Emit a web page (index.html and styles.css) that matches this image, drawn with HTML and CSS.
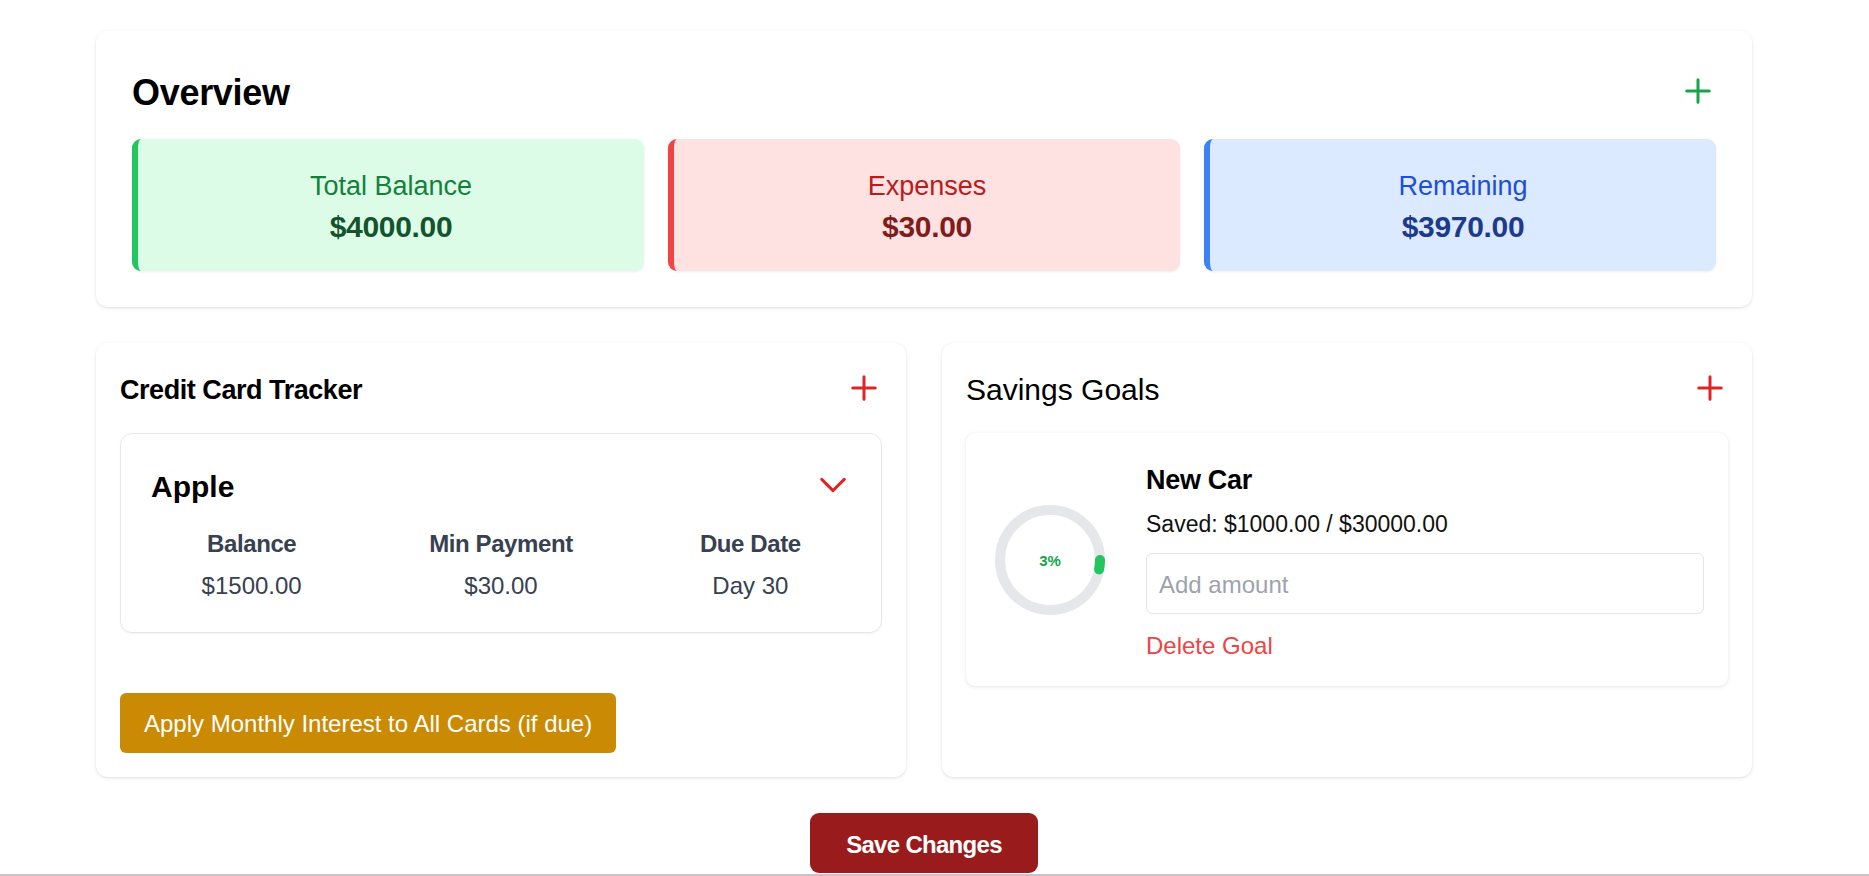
FILE: index.html
```
<!DOCTYPE html>
<html lang="en">
<head>
<meta charset="utf-8">
<title>Budget</title>
<link rel="stylesheet" href="styles.css">
</head>
<body>
<div class="page">
  <main class="container">
    <section class="card overview">
      <div class="card-head">
        <h2 class="overview-title">Overview</h2>
        <button class="icon-btn icon-green" aria-label="Add">
          <svg viewBox="0 0 24 24" width="36" height="36" fill="none" stroke="currentColor" stroke-width="2" stroke-linecap="round"><path d="M12 4.5v15m7.5-7.5h-15"/></svg>
        </button>
      </div>
      <div class="stats">
        <div class="stat stat-green">
          <div class="stat-label">Total Balance</div>
          <div class="stat-value">$4000.00</div>
        </div>
        <div class="stat stat-red">
          <div class="stat-label">Expenses</div>
          <div class="stat-value">$30.00</div>
        </div>
        <div class="stat stat-blue">
          <div class="stat-label">Remaining</div>
          <div class="stat-value">$3970.00</div>
        </div>
      </div>
    </section>

    <div class="columns">
      <section class="card panel">
        <div class="panel-head">
          <h3 class="panel-title panel-title-bold">Credit Card Tracker</h3>
          <button class="icon-btn icon-red" aria-label="Add card">
            <svg viewBox="0 0 24 24" width="36" height="36" fill="none" stroke="currentColor" stroke-width="2" stroke-linecap="round"><path d="M12 4.5v15m7.5-7.5h-15"/></svg>
          </button>
        </div>
        <div class="cc-card">
          <div class="cc-head">
            <h4 class="cc-name">Apple</h4>
            <button class="icon-btn icon-red" aria-label="Expand">
              <svg viewBox="0 0 24 24" width="36" height="36" fill="none" stroke="currentColor" stroke-width="2" stroke-linecap="round" stroke-linejoin="round"><path d="m19.5 8.25-7.5 7.5-7.5-7.5"/></svg>
            </button>
          </div>
          <div class="cc-grid">
            <div class="cc-cell">
              <div class="cc-label">Balance</div>
              <div class="cc-value">$1500.00</div>
            </div>
            <div class="cc-cell">
              <div class="cc-label">Min Payment</div>
              <div class="cc-value">$30.00</div>
            </div>
            <div class="cc-cell">
              <div class="cc-label">Due Date</div>
              <div class="cc-value">Day 30</div>
            </div>
          </div>
        </div>
        <button class="apply-btn">Apply Monthly Interest to All Cards (if due)</button>
      </section>

      <section class="card panel">
        <div class="panel-head">
          <h3 class="panel-title">Savings Goals</h3>
          <button class="icon-btn icon-red" aria-label="Add goal">
            <svg viewBox="0 0 24 24" width="36" height="36" fill="none" stroke="currentColor" stroke-width="2" stroke-linecap="round"><path d="M12 4.5v15m7.5-7.5h-15"/></svg>
          </button>
        </div>
        <div class="goal-card">
          <svg class="ring" viewBox="0 0 120 120" width="120" height="120">
            <circle cx="60" cy="60" r="50" fill="none" stroke="#e5e7eb" stroke-width="10"/>
            <circle cx="60" cy="60" r="50" fill="none" stroke="#22c55e" stroke-width="10" stroke-linecap="round" stroke-dasharray="9.42 314.16"/>
            <text x="60" y="60" class="ring-text" text-anchor="middle" dominant-baseline="central">3%</text>
          </svg>
          <div class="goal-body">
            <div class="goal-name">New Car</div>
            <div class="goal-saved">Saved: $1000.00 / $30000.00</div>
            <input class="goal-input" type="text" placeholder="Add amount">
            <button class="delete-btn">Delete Goal</button>
          </div>
        </div>
      </section>
    </div>

    <div class="save-row">
      <button class="save-btn">Save Changes</button>
    </div>
  </main>
  <div class="footer-line"></div>
</div>
</body>
</html>
```

FILE: styles.css
```
* {
  box-sizing: border-box;
}

html, body {
  margin: 0;
  padding: 0;
  background: #ffffff;
}

body {
  font-family: "Liberation Sans", Arial, sans-serif;
  color: #111111;
  overflow: hidden;
}

button {
  font-family: inherit;
}

.page {
  padding-top: 31px;
}

.container {
  width: 1656px;
  margin-left: 96px;
}

.card {
  background: #ffffff;
  border-radius: 12px;
  box-shadow: 0 1px 4px rgba(0, 0, 0, 0.09), 0 1px 2px rgba(0, 0, 0, 0.05);
}

.overview {
  padding: 36px;
}

.card-head {
  display: flex;
  justify-content: space-between;
  align-items: center;
  height: 48px;
  margin-bottom: 24px;
}

.overview-title {
  margin: 0;
  padding-top: 4px;
  font-size: 36px;
  line-height: 48px;
  font-weight: 700;
  color: #000000;
  letter-spacing: -0.3px;
}

.icon-btn {
  display: flex;
  align-items: center;
  justify-content: center;
  width: 36px;
  height: 36px;
  padding: 0;
  margin: 0;
  border: 0;
  background: transparent;
}

.icon-green {
  color: #16a34a;
}

.icon-red {
  color: #dc2626;
}

.stats {
  display: grid;
  grid-template-columns: repeat(3, 1fr);
  gap: 24px;
}

.stat {
  height: 132px;
  padding: 24px 16px;
  border-radius: 9px;
  border-left: 6px solid;
  text-align: center;
  box-shadow: 0 1px 3px rgba(0, 0, 0, 0.07);
}

.stat-label {
  font-size: 27px;
  line-height: 42px;
  padding-top: 2px;
  height: 42px;
}

.stat-value {
  font-size: 30px;
  line-height: 42px;
  padding-top: 1px;
  height: 42px;
  font-weight: 700;
  letter-spacing: -0.3px;
}

.stat-green {
  background: #dcfce7;
  border-left-color: #22c55e;
}

.stat-green .stat-label {
  color: #15803d;
}

.stat-green .stat-value {
  color: #14532d;
}

.stat-red {
  background: #fee2e2;
  border-left-color: #ef4444;
}

.stat-red .stat-label {
  color: #b91c1c;
}

.stat-red .stat-value {
  color: #7f1d1d;
}

.stat-blue {
  background: #dbeafe;
  border-left-color: #3b82f6;
}

.stat-blue .stat-label {
  color: #1d4ed8;
}

.stat-blue .stat-value {
  color: #1e3a8a;
}

.columns {
  display: grid;
  grid-template-columns: 1fr 1fr;
  gap: 36px;
  margin-top: 36px;
}

.panel {
  padding: 24px;
}

.panel-head {
  display: flex;
  justify-content: space-between;
  align-items: center;
  height: 42px;
  margin-bottom: 24px;
}

.panel-title {
  margin: 0;
  padding-top: 3px;
  font-size: 30px;
  line-height: 42px;
  font-weight: 400;
  color: #000000;
}

.panel-title-bold {
  font-size: 27px;
  font-weight: 700;
  letter-spacing: -0.45px;
}

.cc-card {
  border: 1px solid #e5e7eb;
  border-radius: 12px;
  padding: 30px;
  box-shadow: 0 1px 2px rgba(0, 0, 0, 0.05);
}

.cc-head {
  display: flex;
  justify-content: space-between;
  align-items: center;
  height: 42px;
}

.cc-name {
  margin: 0;
  padding-top: 3px;
  font-size: 30px;
  line-height: 42px;
  font-weight: 700;
  color: #000000;
}

.cc-grid {
  display: grid;
  grid-template-columns: repeat(3, 1fr);
  gap: 48px;
  margin-top: 18px;
  text-align: center;
  color: #374151;
}

.cc-label {
  font-size: 24px;
  line-height: 36px;
  padding-top: 2px;
  height: 36px;
  font-weight: 700;
  color: #374151;
  letter-spacing: -0.4px;
}

.cc-value {
  margin-top: 6px;
  padding-top: 2px;
  font-size: 24px;
  line-height: 36px;
  height: 36px;
}

.apply-btn {
  display: block;
  margin-top: 60px;
  height: 60px;
  padding: 2px 24px 0;
  border: 0;
  border-radius: 6px;
  background: #ca8a04;
  color: #ffffff;
  font-size: 24px;
  line-height: 36px;
}

.goal-card {
  display: flex;
  align-items: center;
  gap: 36px;
  padding: 24px;
  border-radius: 9px;
  background: #ffffff;
  box-shadow: 0 1px 4px rgba(0, 0, 0, 0.1), 0 0 1px rgba(0, 0, 0, 0.06);
}

.ring {
  flex: none;
  display: block;
}

.ring-text {
  font-family: "Liberation Sans", Arial, sans-serif;
  font-size: 15px;
  font-weight: 700;
  fill: #16a34a;
}

.goal-body {
  flex: 1;
  display: flex;
  flex-direction: column;
  align-items: flex-start;
}

.goal-name {
  font-size: 27px;
  line-height: 42px;
  padding-top: 2px;
  height: 42px;
  font-weight: 700;
  color: #000000;
  letter-spacing: -0.3px;
}

.goal-saved {
  margin-top: 6px;
  font-size: 23px;
  line-height: 36px;
  padding-top: 1px;
  height: 36px;
  color: #111111;
}

.goal-input {
  display: block;
  width: 100%;
  height: 61px;
  margin-top: 12px;
  padding: 2px 12px 0;
  border: 1px solid #e2e4e8;
  border-radius: 6px;
  font-family: inherit;
  font-size: 24px;
  color: #111111;
  outline: none;
}

.goal-input::placeholder {
  color: #9ca3af;
}

.delete-btn {
  margin-top: 12px;
  padding: 4px 0 0 0;
  height: 36px;
  border: 0;
  background: transparent;
  color: #ef4444;
  font-size: 24px;
  line-height: 32px;
}

.save-row {
  display: flex;
  justify-content: center;
  margin-top: 36px;
}

.save-btn {
  height: 60px;
  padding: 3px 36px 0;
  border: 0;
  border-radius: 9px;
  background: #991b1b;
  color: #ffffff;
  font-size: 24px;
  line-height: 36px;
  font-weight: 700;
  letter-spacing: -0.7px;
}

.footer-line {
  margin-top: 1px;
  height: 2px;
  background: #cfc0c5;
}
```
